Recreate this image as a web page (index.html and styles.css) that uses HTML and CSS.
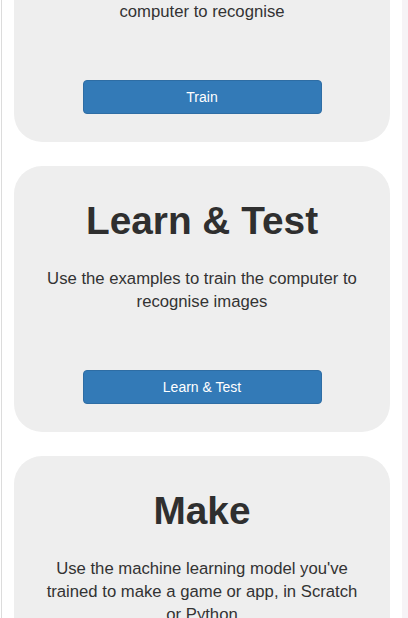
FILE: index.html
```html
<!DOCTYPE html>
<html>
<head>
<meta charset="utf-8">
<link rel="stylesheet" href="styles.css">
</head>
<body>
<div class="page">
  <div class="stack">
    <section class="card card-first">
      <p class="desc">computer to recognise</p>
      <button class="btn">Train</button>
    </section>
    <section class="card">
      <h1 class="title">Learn &amp; Test</h1>
      <p class="desc">Use the examples to train the computer to recognise images</p>
      <button class="btn">Learn &amp; Test</button>
    </section>
    <section class="card">
      <h1 class="title">Make</h1>
      <p class="desc">Use the machine learning model you've trained to make a game or app, in Scratch or Python</p>
      <button class="btn">Make</button>
    </section>
  </div>
  <div class="track"></div>
</div>
</body>
</html>
```
FILE: styles.css
```css
html, body {
  margin: 0;
  padding: 0;
  background: #ffffff;
  height: 618px;
  overflow: hidden;
}
body {
  font-family: "Liberation Sans", Arial, sans-serif;
  color: #333333;
}
.page {
  display: flex;
  height: 618px;
  margin-left: 1px;
  border-left: 1px solid #dcdcdc;
}
.stack {
  flex: 1;
  display: flex;
  flex-direction: column;
  gap: 24px;
  padding-left: 12px;
  padding-right: 12px;
}
.track {
  width: 6px;
  background: #f6f3f6;
}
.card {
  background: #eeeeee;
  border-radius: 28px;
  padding: 34px 25px 28px;
  display: flex;
  flex-direction: column;
  align-items: center;
  text-align: center;
}
.card-first {
  margin-top: -30px;
  padding-top: 30px;
}
.title {
  margin: 0 0 25px;
  font-size: 38.8px;
  line-height: 42px;
  font-weight: bold;
  color: #2f2f2f;
}
.desc {
  margin: 0 0 57px;
  font-size: 16.7px;
  line-height: 23px;
}
.btn {
  width: 239px;
  height: 34px;
  background: #337ab7;
  border: 1px solid #2e6da4;
  border-radius: 4px;
  color: #ffffff;
  font-family: "Liberation Sans", Arial, sans-serif;
  font-size: 14px;
  padding: 0;
}
```
